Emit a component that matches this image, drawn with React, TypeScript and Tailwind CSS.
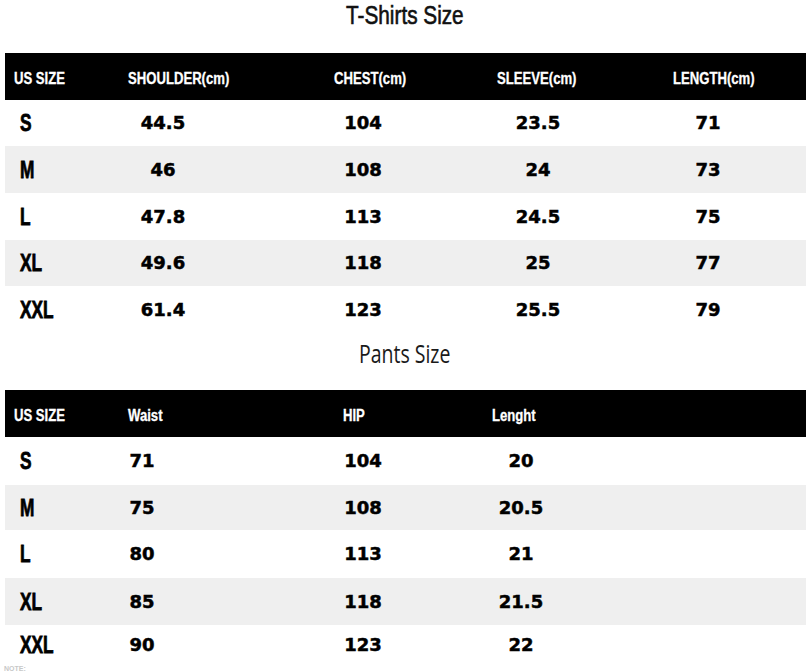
import React from 'react';

type Table = {
  heads: string[];
  cols: string;
  boxes: string[];
  rows: string[][];
  heights: string[];
};

const SHIRTS: Table = {
  heads: ['US SIZE', 'SHOULDER(cm)', 'CHEST(cm)', 'SLEEVE(cm)', 'LENGTH(cm)'],
  cols: 'grid-cols-[123px_206px_163px_176px_1fr]',
  boxes: ['', 'w-[70px]', 'w-[58px]', 'w-[82px]', 'w-[70px]'],
  rows: [
    ['S', '44.5', '104', '23.5', '71'],
    ['M', '46', '108', '24', '73'],
    ['L', '47.8', '113', '24.5', '75'],
    ['XL', '49.6', '118', '25', '77'],
    ['XXL', '61.4', '123', '25.5', '79'],
  ],
  heights: ['h-[46px]', 'h-[47px]', 'h-[47px]', 'h-[46px]', 'h-[47px]'],
};

const PANTS: Table = {
  heads: ['US SIZE', 'Waist', 'HIP', 'Lenght'],
  cols: 'grid-cols-[123px_215px_149px_1fr]',
  boxes: ['', 'w-[28px]', 'w-[40px]', 'w-[58px]'],
  rows: [
    ['S', '71', '104', '20'],
    ['M', '75', '108', '20.5'],
    ['L', '80', '113', '21'],
    ['XL', '85', '118', '21.5'],
    ['XXL', '90', '123', '22'],
  ],
  heights: ['h-[48px]', 'h-[45px]', 'h-[48px]', 'h-[47px]', 'h-[39px]'],
};

const sans = "font-['Liberation_Sans',Arial,sans-serif]";
const numFont = "font-['DejaVu_Sans',sans-serif]";

function SizeTable({ t }: { t: Table }) {
  return (
    <div className="mx-[5px] w-[801px]">
      <div className={`grid ${t.cols} h-[47px] items-center bg-black pt-[4px] text-white ${sans} text-[16px] font-bold`}>
        {t.heads.map((h, i) => (
          <div key={h} className={i === 0 ? 'pl-[9px]' : ''}>
            <span className="inline-block origin-left scale-x-[0.82] whitespace-nowrap [-webkit-text-stroke:0.3px_white]">{h}</span>
          </div>
        ))}
      </div>
      {t.rows.map((r, ri) => (
        <div
          key={r[0]}
          className={`grid ${t.cols} ${t.heights[ri]} items-center ${ri % 2 === 1 ? 'bg-[#efefef]' : 'bg-white'} text-black`}
        >
          {r.map((v, ci) =>
            ci === 0 ? (
              <div key={ci} className={`pl-[15px] ${sans} text-[24px] leading-none font-black`}>
                <span className="inline-block origin-left scale-x-[0.72] [-webkit-text-stroke:0.8px_black]">{v}</span>
              </div>
            ) : (
              <div
                key={ci}
                className={`${t.boxes[ci]} text-center ${numFont} text-[18px] leading-none font-bold [-webkit-text-stroke:0.5px_black]`}
              >
                {v}
              </div>
            )
          )}
        </div>
      ))}
    </div>
  );
}

export default function App() {
  return (
    <div className="h-[672px] w-[810px] overflow-hidden bg-white">
      <div className="flex h-[53px] justify-center pt-[1px]">
        <span className={`inline-block scale-x-[0.83] ${sans} text-[25px] leading-[28px] text-[#111] [-webkit-text-stroke:0.6px_#111]`}>
          T-Shirts Size
        </span>
      </div>
      <SizeTable t={SHIRTS} />
      <div className="flex h-[57px] justify-center pt-[5px]">
        <span className="inline-block scale-x-[0.78] font-['Open_Sans',sans-serif] text-[25px] leading-[30px] text-[#1a1a1a]">
          Pants Size
        </span>
      </div>
      <SizeTable t={PANTS} />
      <div className="pl-[4px] pt-[1px] font-['Liberation_Sans',sans-serif] text-[7px] leading-[7px] font-bold text-[#c8c8c8]">
        NOTE:
      </div>
    </div>
  );
}
